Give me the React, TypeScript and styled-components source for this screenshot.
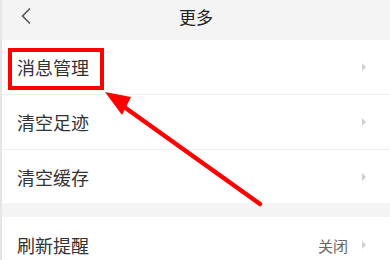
import React from "react";
import styled, { createGlobalStyle } from "styled-components";

const GlobalStyle = createGlobalStyle`
  html, body {
    margin: 0;
    padding: 0;
    background: #ffffff;
  }
  body {
    font-family: "Noto Sans CJK SC", "Noto Sans", sans-serif;
  }
`;

const Page = styled.div`
  position: relative;
  width: 390px;
  height: 260px;
  overflow: hidden;
  background: #ffffff;
  border-left: 2px solid #e6e6e6;
  box-sizing: border-box;
`;

const Header = styled.header`
  position: relative;
  height: 40px;
  display: flex;
  align-items: center;
  justify-content: center;
  background: #f4f4f4;
`;

const BackButton = styled.button`
  position: absolute;
  left: 14px;
  top: 6px;
  width: 20px;
  height: 20px;
  padding: 0;
  border: none;
  background: none;
  display: flex;
  align-items: center;
  justify-content: center;
`;

const Title = styled.h1`
  margin: 0 0 8px;
  font-size: 17px;
  font-weight: 400;
  color: #222;
  line-height: 1;
`;

const Section = styled.section`
  background: #fff;
`;

const Gap = styled.div`
  height: 14px;
  background: #f4f4f4;
`;

const Row = styled.div<{ $height: number; $last?: boolean }>`
  height: ${(p) => p.$height}px;
  display: flex;
  align-items: center;
  padding: 0 24px 0 15px;
  border-bottom: ${(p) => (p.$last ? "none" : "1px solid #f0f0f0")};
`;

const Label = styled.span`
  flex: 1;
  font-size: 18px;
  color: #333;
  line-height: 1;
`;

const Value = styled.span`
  font-size: 15px;
  color: #666;
  margin-right: 14px;
  line-height: 1;
`;

const Caret = styled.span`
  width: 0;
  height: 0;
  border-top: 4px solid transparent;
  border-bottom: 4px solid transparent;
  border-left: 4px solid #cfcfcf;
`;

const Annotation = styled.svg`
  position: absolute;
  left: 0;
  top: 0;
  pointer-events: none;
`;

type Item = { label: string; value?: string };

function SettingRow({ item, height, last }: { item: Item; height: number; last?: boolean }) {
  return (
    <Row $height={height} $last={last}>
      <Label>{item.label}</Label>
      {item.value && <Value>{item.value}</Value>}
      <Caret />
    </Row>
  );
}

export default function App() {
  return (
    <>
      <GlobalStyle />
      <Page>
        <Header>
          <BackButton aria-label="返回">
            <svg width="12" height="18" viewBox="0 0 12 18">
              <path d="M10 1.5 L2.5 9 L10 16.5" fill="none" stroke="#555" strokeWidth="1.6" />
            </svg>
          </BackButton>
          <Title>更多</Title>
        </Header>
        <Section>
          <SettingRow item={{ label: "消息管理" }} height={54} />
          <SettingRow item={{ label: "清空足迹" }} height={54} />
          <SettingRow item={{ label: "清空缓存" }} height={53} last />
        </Section>
        <Gap />
        <Section>
          <SettingRow item={{ label: "刷新提醒", value: "关闭" }} height={56} last />
        </Section>
        <Annotation width="390" height="260" viewBox="0 0 390 260">
          <rect x="8" y="50" width="92" height="38" fill="none" stroke="#ff0000" strokeWidth="4" />
          <line x1="258" y1="204" x2="118" y2="104" stroke="#ff0000" strokeWidth="4.5" strokeLinecap="round" />
          <polygon points="103,92 129,97 120,115" fill="#ff0000" />
        </Annotation>
      </Page>
    </>
  );
}
